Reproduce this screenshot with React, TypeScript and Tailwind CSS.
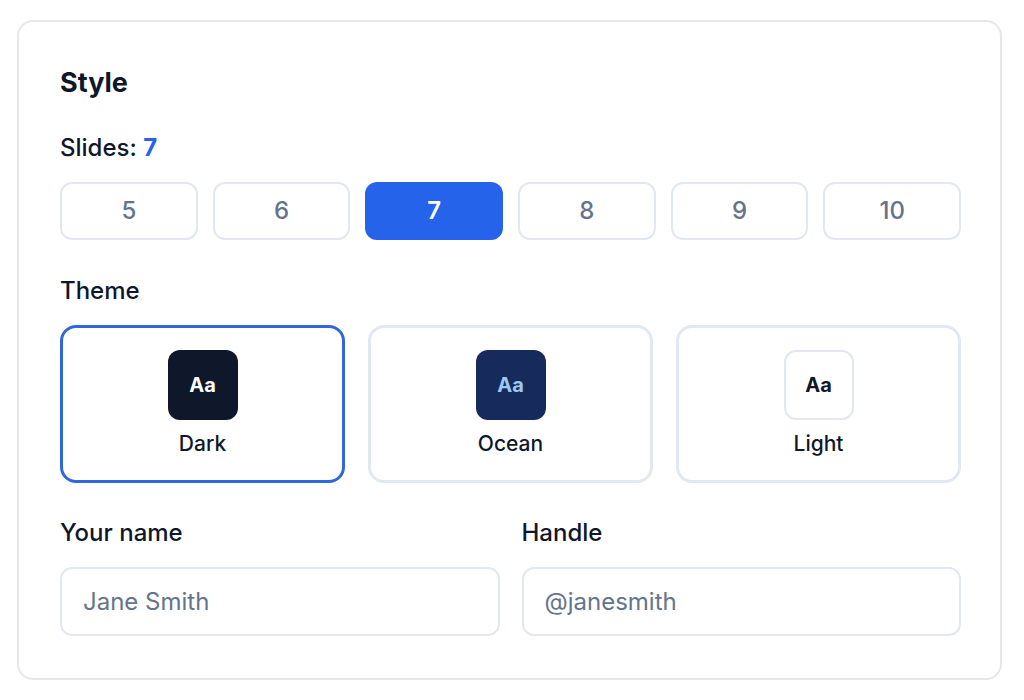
import { useState } from "react";

const slideCounts = [5, 6, 7, 8, 9, 10];

interface ThemeOption {
  id: string;
  label: string;
  swatch: string;
}

const themes: ThemeOption[] = [
  { id: "dark", label: "Dark", swatch: "bg-[#0f172a] text-white" },
  { id: "ocean", label: "Ocean", swatch: "bg-[#172a5c] text-[#9cc8f5]" },
  { id: "light", label: "Light", swatch: "bg-white text-[#0f172a] border-2 border-[#e2e8f0]" },
];

export default function App() {
  const [slides, setSlides] = useState(7);
  const [theme, setTheme] = useState("dark");

  return (
    <div className="min-h-screen bg-white pt-[20px] pl-[17px] font-['Inter',sans-serif] text-[#0f172a]">
      <div className="w-[985px] rounded-[16px] border-2 border-[#e5e7eb] bg-white pl-[41px] pr-[39px] pt-[41px] pb-[42px]">
        <h2 className="text-[27px] leading-[40px] font-bold">Style</h2>

        <div className="mt-[29px] text-[24px] leading-[32px] font-medium">
          Slides: <span className="font-bold text-[#2563eb]">{slides}</span>
        </div>
        <div className="mt-[18px] grid grid-cols-6 gap-[15px]">
          {slideCounts.map((n) => (
            <button
              key={n}
              onClick={() => setSlides(n)}
              className={`h-[58px] rounded-[12px] text-[24px] ${
                slides === n
                  ? "bg-[#2563eb] font-semibold text-white"
                  : "border-2 border-[#e2e8f0] bg-white font-medium text-[#64748b]"
              }`}
            >
              {n}
            </button>
          ))}
        </div>

        <div className="mt-[35px] text-[24px] leading-[32px] font-medium">Theme</div>
        <div className="mt-[18px] grid grid-cols-3 gap-[23px]">
          {themes.map((t) => (
            <button
              key={t.id}
              onClick={() => setTheme(t.id)}
              className={`flex h-[158px] flex-col items-center rounded-[16px] border-[3px] bg-white pt-[22px] ${
                theme === t.id ? "border-[#2f67df]" : "border-[#e2e8f0]"
              }`}
            >
              <div
                className={`flex h-[70px] w-[70px] items-center justify-center rounded-[12px] text-[20px] font-bold ${t.swatch}`}
              >
                Aa
              </div>
              <span className="mt-[10px] text-[21px] leading-[28px] font-medium">{t.label}</span>
            </button>
          ))}
        </div>

        <div className="mt-[34px] grid grid-cols-2 gap-[22px]">
          <label className="flex flex-col">
            <span className="text-[24px] leading-[32px] font-medium">Your name</span>
            <input
              placeholder="Jane Smith"
              className="mt-[18px] h-[69px] rounded-[12px] border-2 border-[#e2e8f0] px-[21px] text-[24px] outline-none placeholder:text-[#64748b]"
            />
          </label>
          <label className="flex flex-col">
            <span className="text-[24px] leading-[32px] font-medium">Handle</span>
            <input
              placeholder="@janesmith"
              className="mt-[18px] h-[69px] rounded-[12px] border-2 border-[#e2e8f0] px-[21px] text-[24px] outline-none placeholder:text-[#64748b]"
            />
          </label>
        </div>
      </div>
    </div>
  );
}
